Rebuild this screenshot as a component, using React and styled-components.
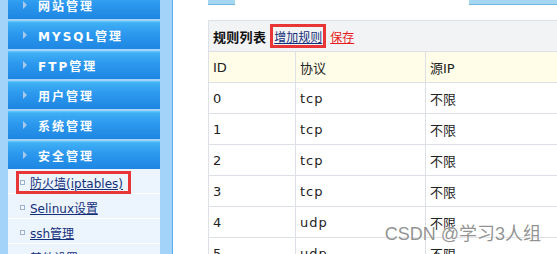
import React from 'react'
import styled, { createGlobalStyle } from 'styled-components'

const GlobalStyle = createGlobalStyle`
  html, body {
    margin: 0;
    padding: 0;
    background: #fff;
    overflow: hidden;
  }
  body {
    font-family: "DejaVu Sans", "Noto Sans CJK SC", sans-serif;
    font-size: 12px;
    color: #222;
  }
`

const Page = styled.div`
  position: relative;
  display: flex;
  width: 557px;
  height: 254px;
  overflow: hidden;
`

const Sidebar = styled.div`
  width: 172px;
  flex: none;
  background: #a3d3f8;
  border-right: 1px solid #5aade6;
  overflow: hidden;
`

const Menu = styled.div`
  margin: -9px 0 0 8px;
  width: 152px;
`

const MenuButton = styled.div`
  display: flex;
  align-items: center;
  height: 28px;
  margin-bottom: ${p => (p.$open ? '0' : '2px')};
  background: linear-gradient(#66cbfd 0, #3fb0f5 2px, #2c98ee 45%, #1e86e2 100%);
  color: #fff;
  font-weight: bold;
  font-size: 12px;
  letter-spacing: 2px;
`

const Arrow = styled.span`
  width: 0;
  height: 0;
  margin: 0 11px 0 15px;
  border-top: 4px solid transparent;
  border-bottom: 4px solid transparent;
  border-left: 4px solid #a9c9ea;
`

const SubMenu = styled.div`
  background: #ecf4fd;
`

const SubItem = styled.div`
  display: flex;
  align-items: flex-end;
  height: 24px;
  border-bottom: 1px solid #fff;
  padding-left: 11px;
`

const Marked = styled.div`
  display: flex;
  align-items: center;
  height: 23px;
  margin-left: -3px;
  margin-bottom: -1px;
  padding: 0 5px 0 1px;
  border: 3px solid ${p => (p.$marked ? '#e83535' : 'transparent')};
  box-sizing: border-box;
`

const Bullet = styled.span`
  width: 3px;
  height: 3px;
  border: 1px solid #9cb3cc;
  background: #f4f8fc;
  margin-right: 5px;
`

const SubLink = styled.a`
  color: #15307a;
  text-decoration: underline;
  font-size: 12px;
  white-space: nowrap;
`

const Main = styled.div`
  flex: 1;
  padding-left: 35px;
  overflow: hidden;
`

const TabLine = styled.div`
  display: flex;
  height: 5px;
  margin-bottom: 15px;
`

const TabPiece = styled.div`
  width: ${p => p.$w || 'auto'};
  flex: ${p => (p.$grow ? 1 : 'none')};
  background: ${p => (p.$blue ? '#a6d7f1' : 'transparent')};
  border-bottom: 1px solid ${p => (p.$blue ? '#6bb9e2' : 'transparent')};
`

const Table = styled.div`
  width: 420px;
  border-top: 1px solid #dde0e6;
  border-left: 1px solid #dde0e6;
`

const Row = styled.div`
  display: grid;
  grid-template-columns: 87px 130px 1fr;
  background: ${p => p.$bg || '#fff'};
`

const Cell = styled.div`
  height: 30px;
  display: flex;
  align-items: center;
  padding-left: 4px;
  border-right: 1px solid #dde0e6;
  border-bottom: 1px solid #dde0e6;
  font-size: 13px;
  color: #222;
  letter-spacing: ${p => (p.$wide ? '1px' : 'normal')};
  grid-column: ${p => (p.$span ? '1 / -1' : 'auto')};
`

const Title = styled.b`
  font-size: 13px;
  color: #111;
  margin-right: 4px;
  letter-spacing: 0.3px;
`

const LinkBox = styled.span`
  display: flex;
  align-items: center;
  height: 24px;
  padding: 0 1px;
  border: 3px solid #e83535;
  box-sizing: border-box;
  margin-right: 4px;
`

const Link = styled.a`
  color: ${p => (p.$red ? '#e81c1c' : '#15307a')};
  text-decoration: underline;
  font-size: 12px;
`

const Watermark = styled.div`
  position: absolute;
  right: 16px;
  bottom: 9px;
  font-family: "Liberation Sans", "Noto Sans CJK SC", sans-serif;
  font-size: 18px;
  color: rgba(110, 110, 110, 0.75);
  text-shadow: 0 0 2px #fff, 0 0 1px #fff;
  white-space: nowrap;
`

const menus = ['网站管理', 'MYSQL管理', 'FTP管理', '用户管理', '系统管理', '安全管理']
const subs = [
  { label: '防火墙(iptables)', marked: true },
  { label: 'Selinux设置' },
  { label: 'ssh管理' },
  { label: '其他设置' },
]
const rules = [
  ['0', 'tcp', '不限'],
  ['1', 'tcp', '不限'],
  ['2', 'tcp', '不限'],
  ['3', 'tcp', '不限'],
  ['4', 'udp', '不限'],
  ['5', 'udp', '不限'],
]

export default function App() {
  return (
    <Page>
      <GlobalStyle />
      <Sidebar>
        <Menu>
          {menus.map((m, i) => (
            <MenuButton key={m} $open={i === menus.length - 1}>
              <Arrow />
              {m}
            </MenuButton>
          ))}
          <SubMenu>
            {subs.map(s => (
              <SubItem key={s.label}>
                <Marked $marked={s.marked}>
                  <Bullet />
                  <SubLink href="#">{s.label}</SubLink>
                </Marked>
              </SubItem>
            ))}
          </SubMenu>
        </Menu>
      </Sidebar>
      <Main>
        <TabLine>
          <TabPiece $w="27px" $blue />
          <TabPiece $w="234px" />
          <TabPiece $grow $blue />
        </TabLine>
        <Table>
          <Row $bg="#f2f3f5">
            <Cell $span>
              <Title>规则列表</Title>
              <LinkBox>
                <Link href="#">增加规则</Link>
              </LinkBox>
              <Link href="#" $red>保存</Link>
            </Cell>
          </Row>
          <Row $bg="#fffde8">
            <Cell>ID</Cell>
            <Cell>协议</Cell>
            <Cell>源IP</Cell>
          </Row>
          {rules.map(r => (
            <Row key={r[0]}>
              <Cell>{r[0]}</Cell>
              <Cell $wide>{r[1]}</Cell>
              <Cell>{r[2]}</Cell>
            </Row>
          ))}
        </Table>
      </Main>
      <Watermark>CSDN @学习3人组</Watermark>
    </Page>
  )
}
